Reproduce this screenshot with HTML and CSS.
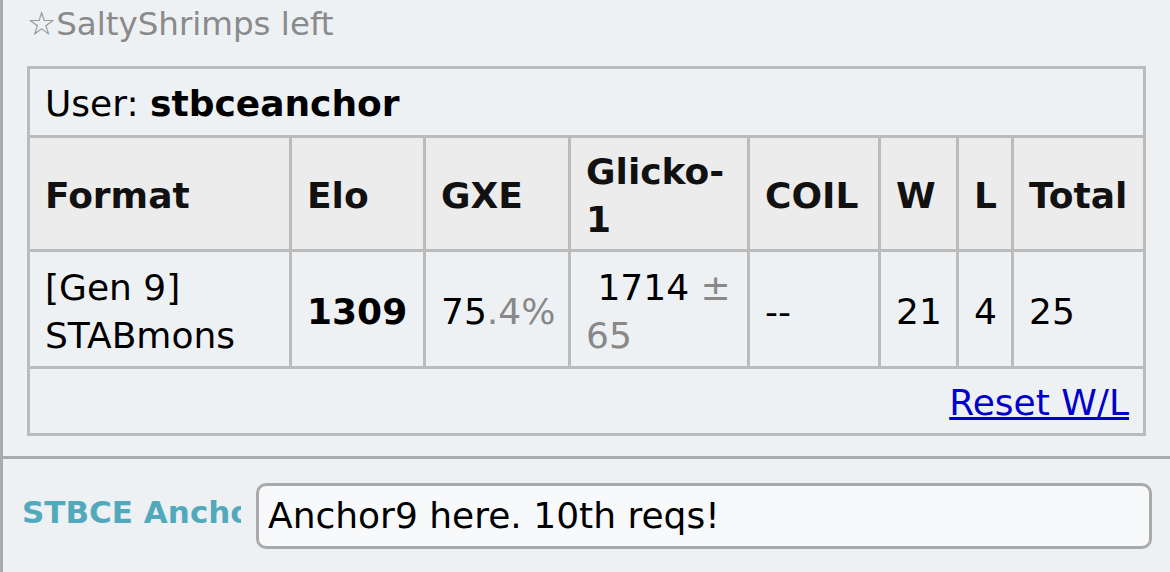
FILE: index.html
```html
<!DOCTYPE html>
<html>
<head>
<meta charset="utf-8">
<link rel="stylesheet" href="styles.css">
</head>
<body>
<div class="room">
  <div class="log">
    <div class="notice">☆SaltyShrimps left</div>
    <table class="ladder">
      <colgroup>
        <col class="c-format"><col class="c-elo"><col class="c-gxe"><col class="c-glicko"><col class="c-coil"><col class="c-w"><col class="c-l"><col class="c-total">
      </colgroup>
      <tr><td colspan="8" class="user">User: <strong>stbceanchor</strong></td></tr>
      <tr class="head">
        <th>Format</th><th>Elo</th><th>GXE</th><th>Glicko-1</th><th>COIL</th><th>W</th><th>L</th><th>Total</th>
      </tr>
      <tr class="data">
        <td>[Gen 9]<br>STABmons</td>
        <td><strong>1309</strong></td>
        <td>75<span class="dim">.4%</span></td>
        <td>&nbsp;1714 <span class="dim">± 65</span></td>
        <td>--</td>
        <td>21</td>
        <td>4</td>
        <td>25</td>
      </tr>
      <tr><td colspan="8" class="reset"><a href="#">Reset W/L</a></td></tr>
    </table>
  </div>
  <div class="composer">
    <div class="name">STBCE Anchor9</div>
    <div class="input">Anchor9 here. 10th reqs!</div>
  </div>
</div>
</body>
</html>
```
FILE: styles.css
```css
html, body {
  margin: 0;
  padding: 0;
  background: #eef1f4;
}
body {
  font-family: "DejaVu Sans", Verdana, sans-serif;
  color: #000;
}
.room {
  height: 572px;
  border-left: 3px solid #aaa;
  box-sizing: border-box;
  overflow: hidden;
}
.log {
  padding: 4px 0 20px 24px;
  border-bottom: 3px solid #aaa;
}
.notice {
  font-size: 32.5px;
  line-height: 41px;
  color: #8a8a8a;
  margin-bottom: 21px;
}
.ladder {
  width: 1119px;
  table-layout: fixed;
  border-collapse: separate;
  border-spacing: 0;
  border-top: 3px solid #bbb;
  border-left: 3px solid #bbb;
  font-size: 36px;
  line-height: 48px;
}
.c-format { width: 262px; }
.c-elo { width: 134px; }
.c-gxe { width: 145px; }
.c-glicko { width: 179px; }
.c-coil { width: 131px; }
.c-w { width: 78px; }
.c-l { width: 55px; }
.c-total { width: 132px; }
.ladder td, .ladder th {
  border-right: 3px solid #bbb;
  border-bottom: 3px solid #bbb;
  text-align: left;
  vertical-align: middle;
  padding: 12px 15px 6px;
}
.ladder th {
  background: #ececec;
  font-weight: bold;
  color: #111;
  padding: 10px 15px 5px;
}
.ladder td.user {
  padding: 11px 15px 7px;
}
.ladder td.reset {
  text-align: right;
  padding: 10px 14px 6px;
}
.reset a {
  color: #0000cc;
  text-decoration: underline;
}
.dim {
  color: #888;
}
.composer {
  display: flex;
  align-items: flex-start;
  padding: 24px 0 0 19px;
}
.name {
  width: 219px;
  flex: none;
  overflow: hidden;
  white-space: nowrap;
  font-size: 31px;
  font-weight: bold;
  color: #53a9bc;
  line-height: 40px;
  margin-top: 9px;
}
.input {
  margin-left: 15px;
  width: 896px;
  height: 66px;
  box-sizing: border-box;
  border: 3px solid #aaa;
  border-radius: 10px;
  background: #f8f9fa;
  font-size: 36px;
  line-height: 60px;
  padding-left: 9px;
  white-space: nowrap;
  color: #000;
}
```
